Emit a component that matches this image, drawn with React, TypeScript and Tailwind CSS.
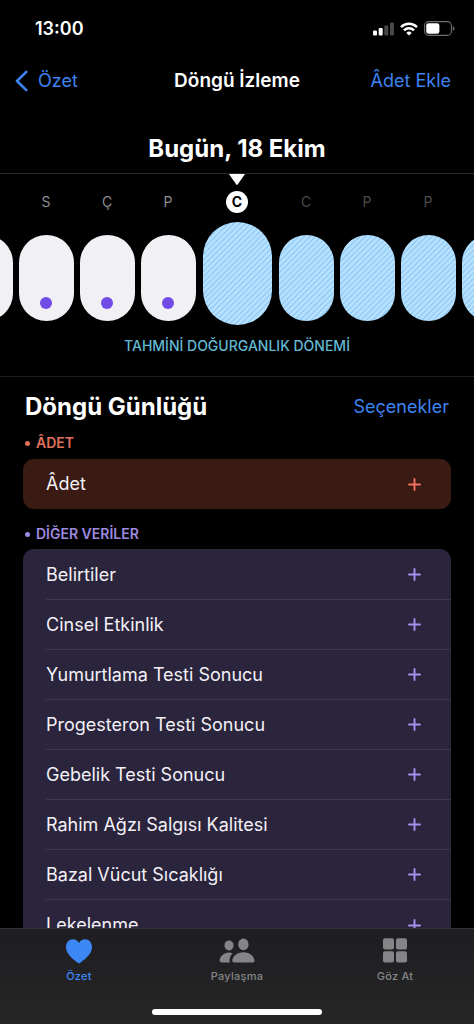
import { ReactNode } from "react";

type Day = {
  id: number;
  letter: string;
  kind: "logged" | "fertile" | "today";
  dot?: boolean;
};

// One strip of days, centred on today. The outermost ones run off screen.
const DAYS: Day[] = [
  { id: 14, letter: "", kind: "logged" },
  { id: 15, letter: "S", kind: "logged", dot: true },
  { id: 16, letter: "Ç", kind: "logged", dot: true },
  { id: 17, letter: "P", kind: "logged", dot: true },
  { id: 18, letter: "C", kind: "today" },
  { id: 19, letter: "C", kind: "fertile" },
  { id: 20, letter: "P", kind: "fertile" },
  { id: 21, letter: "P", kind: "fertile" },
  { id: 22, letter: "", kind: "fertile" },
];

const OTHER_DATA = [
  "Belirtiler",
  "Cinsel Etkinlik",
  "Yumurtlama Testi Sonucu",
  "Progesteron Testi Sonucu",
  "Gebelik Testi Sonucu",
  "Rahim Ağzı Salgısı Kalitesi",
  "Bazal Vücut Sıcaklığı",
  "Lekelenme",
];

const STRIPES =
  "bg-[repeating-linear-gradient(135deg,#b5e0ff_0px,#b5e0ff_2px,#8ac6f2_3px,#b5e0ff_4px)]";

function StatusBar() {
  return (
    <div className="flex h-[57px] items-center justify-between pl-[35px] pr-[19px] text-white">
      <span className="text-[18px] font-semibold leading-6">13:00</span>
      <div className="flex items-center gap-[6px]">
        {/* signal */}
        <svg width="21" height="14" viewBox="0 0 21 14" fill="currentColor" aria-hidden="true">
          <rect x="0" y="8.5" width="4" height="5" rx="1" />
          <rect x="5.7" y="6" width="4" height="7.5" rx="1" />
          <rect x="11.3" y="3.5" width="4" height="10" rx="1" opacity="0.28" />
          <rect x="17" y="0.5" width="4" height="13" rx="1" opacity="0.28" />
        </svg>
        {/* wifi */}
        <svg width="18" height="14" viewBox="0 0 18 14" fill="none" stroke="currentColor" strokeWidth="2.4" aria-hidden="true">
          <path d="M1 5.1a11.4 11.4 0 0 1 16 0" />
          <path d="M4 8.3a7.1 7.1 0 0 1 10 0" />
          <path d="M9 13.6 6.3 10.9a3.9 3.9 0 0 1 5.4 0z" fill="currentColor" stroke="none" />
        </svg>
        {/* battery */}
        <svg width="31" height="15" viewBox="0 0 31 15" aria-hidden="true">
          <rect x="0.6" y="0.6" width="26.8" height="13.8" rx="4" fill="none" stroke="#6f6f6f" strokeWidth="1.1" />
          <rect x="2.2" y="2.2" width="13.2" height="10.6" rx="2.4" fill="currentColor" />
          <path d="M28.8 5.2c1.1.4 1.7 1.2 1.7 2.3s-.6 1.9-1.7 2.3z" fill="#6f6f6f" />
        </svg>
      </div>
    </div>
  );
}

function NavBar() {
  return (
    <nav className="grid h-12 grid-cols-[1fr_auto_1fr] items-center px-[15px] text-[18px] leading-6">
      <button type="button" className="flex items-center gap-[10px] justify-self-start text-[#3d83f2]">
        <svg width="13" height="22" viewBox="0 0 13 22" fill="none" stroke="currentColor" strokeWidth="2.6" strokeLinecap="round" strokeLinejoin="round" aria-hidden="true">
          <path d="M11.3 1.8 2 11l9.3 9.2" />
        </svg>
        Özet
      </button>
      <h1 className="text-[19px] font-semibold text-white">Döngü İzleme</h1>
      <button type="button" className="justify-self-end pr-2 text-[#3d83f2]">
        Âdet Ekle
      </button>
    </nav>
  );
}

function DayColumn({ day }: { day: Day }) {
  if (day.kind === "today") {
    return (
      <button type="button" className="mx-px flex shrink-0 flex-col items-center gap-[9px]">
        <span className="flex size-[22px] items-center justify-center rounded-full bg-white text-[14px] font-bold leading-none text-black">
          {day.letter}
        </span>
        <span className={`h-[103px] w-[69px] rounded-full ${STRIPES}`} />
      </button>
    );
  }
  const fertile = day.kind === "fertile";
  return (
    <button type="button" className="flex shrink-0 flex-col items-center gap-[9px]">
      <span
        className={`flex h-[22px] items-center text-[14px] leading-none ${fertile ? "text-[#4b4b4d]" : "text-[#8d8d92]"}`}
      >
        {day.letter}
      </span>
      <span className="flex h-[103px] items-end pb-1">
        <span
          className={`flex h-[86px] w-[55px] items-end justify-center rounded-full pb-[12px] ${fertile ? STRIPES : "bg-[#f1f0f5]"}`}
        >
          {day.dot && <span className="size-3 rounded-full bg-[#714be6]" />}
        </span>
      </span>
    </button>
  );
}

function CycleStrip() {
  return (
    <section>
      <h2 className="flex h-[69px] items-end justify-center border-b border-[#2a2a2c] pb-2 text-[24px] font-bold leading-8 text-white">
        Bugün, 18 Ekim
      </h2>
      <div className="flex flex-col items-center overflow-hidden border-b border-[#1f1f21] pb-5">
        <svg width="16" height="11" viewBox="0 0 16 11" fill="#fff" aria-hidden="true">
          <path d="M0 0h16L8.9 10.2q-.9 1.2-1.8 0z" />
        </svg>
        <div className="mt-[6px] flex justify-center gap-[6px]">
          {DAYS.map((day) => (
            <DayColumn key={day.id} day={day} />
          ))}
        </div>
        <p className="mt-[11px] text-[14px] font-medium leading-5 text-[#62b9d3]">
          TAHMİNİ DOĞURGANLIK DÖNEMİ
        </p>
      </div>
    </section>
  );
}

function AddRow({ label, tone }: { label: string; tone: string }) {
  return (
    <button type="button" className="flex h-full w-full items-center justify-between pr-[30px] text-left text-[18px] leading-6 text-[#f4f1f6]">
      {label}
      <svg width="13" height="13" viewBox="0 0 13 13" fill="none" stroke="currentColor" strokeWidth="1.9" strokeLinecap="round" className={tone} aria-hidden="true">
        <path d="M6.5 1v11M1 6.5h11" />
      </svg>
    </button>
  );
}

function GroupTitle({ children, tone }: { children: ReactNode; tone: string }) {
  return (
    <h3 className={`flex h-5 items-center gap-[6px] pl-[2px] text-[14px] font-semibold leading-5 ${tone}`}>
      <span className="size-[5px] rounded-full bg-current" />
      {children}
    </h3>
  );
}

function CycleLog() {
  return (
    <section className="px-[23px]">
      <div className="flex h-14 items-center justify-between px-[2px] pt-1">
        <h2 className="text-[24px] font-bold leading-8 text-white">Döngü Günlüğü</h2>
        <button type="button" className="text-[18px] leading-6 text-[#3d83f2]">
          Seçenekler
        </button>
      </div>

      <GroupTitle tone="text-[#e2705c]">ÂDET</GroupTitle>
      <div className="mt-[6px] h-[50px] rounded-[11px] bg-[#391b13] pl-[23px]">
        <AddRow label="Âdet" tone="text-[#f2705f]" />
      </div>

      <div className="mt-[15px]">
        <GroupTitle tone="text-[#9d8ae0]">DİĞER VERİLER</GroupTitle>
      </div>
      <ul className="mt-[5px] divide-y divide-[#3d3750] rounded-[11px] bg-[#2a243c] pl-[23px] pt-px">
        {OTHER_DATA.map((label) => (
          <li key={label} className="h-[50px]">
            <AddRow label={label} tone="text-[#a791ee]" />
          </li>
        ))}
      </ul>
    </section>
  );
}

function Tab({ label, tone, children }: { label: string; tone: string; children: ReactNode }) {
  return (
    <button type="button" className={`flex flex-col items-center gap-[3px] text-[11px] font-medium leading-4 tracking-wide ${tone}`}>
      {children}
      {label}
    </button>
  );
}

function TabBar() {
  return (
    <footer className="h-24 shrink-0 border-t border-[#34323f] bg-linear-to-b from-[#1e1e22] to-[#262626]">
      <div className="grid grid-cols-3 pt-2">
        <Tab label="Özet" tone="text-[#3d87f5]">
          <svg width="28" height="28" viewBox="0 0 28 28" fill="currentColor" aria-hidden="true">
            <path d="M14 26.3c-.4 0-.8-.2-1.3-.6C5.6 20.6 1 15.8 1 10 1 5.5 4 2.2 7.9 2.2c2.7 0 4.9 1.4 6.1 3.7 1.2-2.3 3.4-3.7 6.1-3.7C24 2.2 27 5.5 27 10c0 5.8-4.6 10.6-11.7 15.7-.5.4-.9.6-1.300.6z" />
          </svg>
        </Tab>
        <Tab label="Paylaşma" tone="text-[#858587]">
          <svg width="36" height="28" viewBox="0 0 36 28" fill="currentColor" aria-hidden="true">
            <ellipse cx="10" cy="8.4" rx="4.5" ry="5" />
            <path d="M13.5 16.2C12.5 15.7 11.3 15.4 10 15.4c-5 0-9.3 3.9-9.3 8.2 0 1.3.7 1.9 1.9 1.9h8.300c-1.100-2.800 0-6.400 2.600-9.300z" />
            <ellipse cx="24.4" cy="7.4" rx="5.2" ry="5.8" />
            <path d="M24.4 15.3c6.4 0 11.1 4.4 11.1 8.5 0 1.2-.7 1.7-2 1.7H15.3c-1.300 0-2-.5-2-1.700 0-4.100 4.700-8.500 11.100-8.500z" />
          </svg>
        </Tab>
        <Tab label="Göz At" tone="text-[#858587]">
          <svg width="26" height="28" viewBox="0 0 26 28" fill="currentColor" aria-hidden="true">
            <rect x="1" y="1.3" width="11" height="11.3" rx="2" />
            <rect x="14" y="1.3" width="11" height="11.3" rx="2" />
            <rect x="1" y="14.3" width="11" height="11.3" rx="2" />
            <rect x="14" y="14.3" width="11" height="11.3" rx="2" />
          </svg>
        </Tab>
      </div>
      {/* home indicator */}
      <div className="mx-auto mt-[25px] h-[6px] w-[170px] rounded-full bg-white" />
    </footer>
  );
}

export default function App() {
  return (
    <div className="flex h-screen flex-col bg-black font-['Inter',sans-serif]">
      <main className="min-h-0 flex-1 overflow-hidden">
        <StatusBar />
        <NavBar />
        <CycleStrip />
        <CycleLog />
      </main>
      <TabBar />
    </div>
  );
}
